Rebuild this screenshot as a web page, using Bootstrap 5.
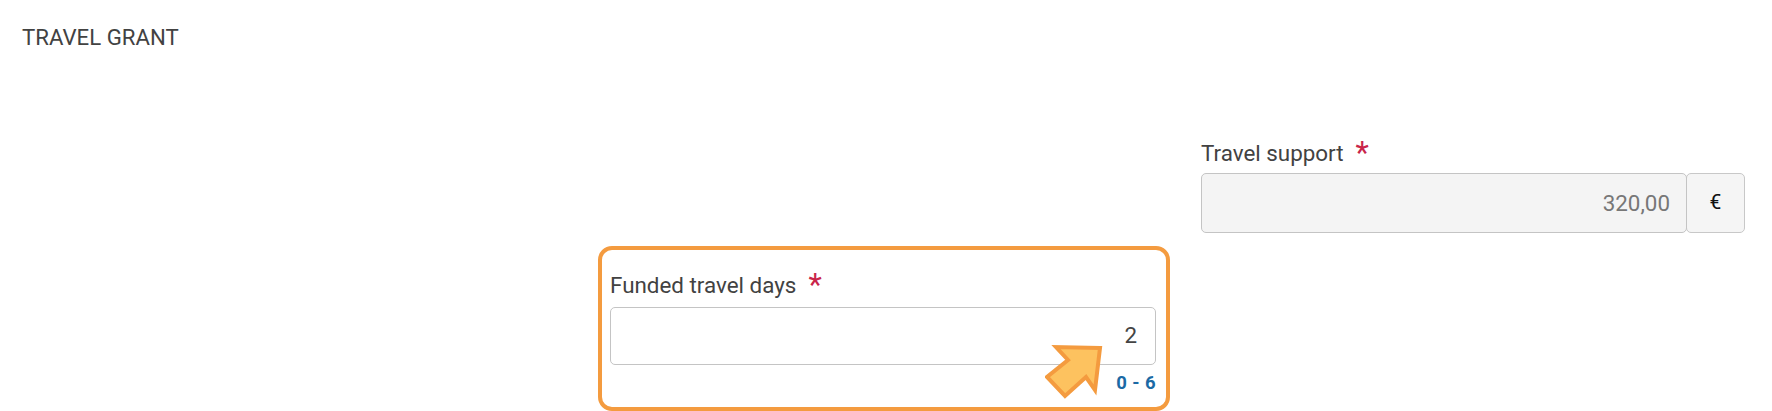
<!DOCTYPE html>
<html lang="en">
<head>
<meta charset="utf-8">
<title>Travel grant</title>
<link href="https://cdn.jsdelivr.net/npm/bootstrap@5.3.0/dist/css/bootstrap.min.css" rel="stylesheet">
<style>
html, body { height: 411px; overflow: hidden; background: #fff; }
body { font-family: Roboto, "Liberation Sans", sans-serif; color: #424242; font-size: 22.4px; }
.sheet { padding: 23px 27px 0 22px; }
.sheet-title { font-size: 22.2px; line-height: 28px; margin: 0 0 87px; font-weight: 400; color: #424242; }
.field-grid { display: grid; grid-template-columns: 547px 547px 544px; column-gap: 45px; margin-left: -5px; }
.slot-support { grid-column: 3; grid-row: 1; }
.slot-days { grid-column: 2; grid-row: 2; margin: 13px -14px 0 -11px; border: 4px solid #f49b3f; border-radius: 14px; padding: 20px 10px 0 8px; height: 165px; position: relative; }
.field-label { font-size: 22.4px; line-height: 30px; margin-bottom: 5px; color: #424242; display: flex; align-items: flex-start; }
.slot-days .field-label { margin-bottom: 7px; }
.req { color: #c9254a; font-size: 31px; line-height: 30px; margin-left: 12px; }
.grant-input.form-control { height: 60px; border: 1.5px solid #c4c4c4; border-radius: 5px !important; font-size: 22.4px; text-align: right; padding: 0 16px 0 12px; color: #444; }
.grant-input.form-control:disabled { background: #f4f4f4; color: #777; opacity: 1; }
.grant-addon.input-group-text { width: 59px; justify-content: center; background: #f5f5f5; border: 1.5px solid #c8c8c8; border-radius: 5px !important; font-size: 21px; font-weight: 400; color: #111; padding: 0; }
.days-input.form-control { height: 58px; padding-right: 18px; padding-bottom: 2px; }
.range-hint { text-align: right; color: #1b6aa5; font-weight: 700; font-size: 18.5px; line-height: 22px; margin-top: 7px; letter-spacing: .4px; }
.pointer-arrow { position: absolute; left: 443px; top: 94px; width: 62px; height: 62px; }
</style>
</head>
<body>
<div class="sheet">
  <h1 class="sheet-title">TRAVEL GRANT</h1>
  <div class="field-grid">
    <div class="slot-support">
      <label class="field-label" for="support">Travel support <span class="req">*</span></label>
      <div class="input-group">
        <input id="support" class="form-control grant-input" type="text" value="320,00" disabled>
        <span class="input-group-text grant-addon">€</span>
      </div>
    </div>
    <div class="slot-days">
      <label class="field-label" for="days">Funded travel days <span class="req">*</span></label>
      <input id="days" class="form-control grant-input days-input" type="text" value="2">
      <div class="range-hint">0 - 6</div>
      <svg class="pointer-arrow" viewBox="0 0 62 62" aria-hidden="true">
        <polygon points="55,4 11,3 23,16 2,33 20,52 41,33 50,46" fill="#fdc25f" stroke="#f49b3f" stroke-width="4" stroke-linejoin="miter"/>
      </svg>
    </div>
  </div>
</div>
<script src="https://cdn.jsdelivr.net/npm/bootstrap@5.3.0/dist/js/bootstrap.bundle.min.js"></script>
</body>
</html>
